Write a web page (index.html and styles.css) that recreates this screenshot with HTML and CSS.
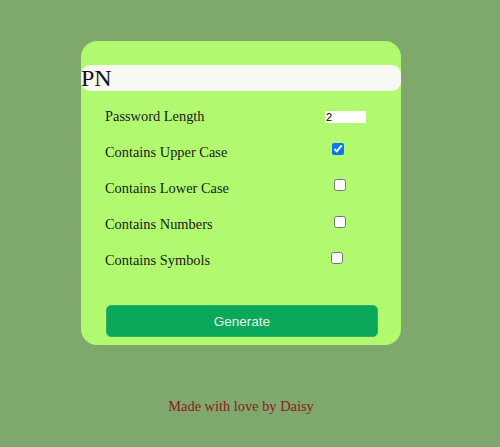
FILE: index.html
```html
<!DOCTYPE html>
<html>
<head>
<meta charset="utf-8">
<link rel="stylesheet" href="styles.css">
</head>
<body>
<div class="page">
  <div class="card">
    <h1 class="title">PN</h1>
    <div class="options">
      <label class="opt-label">Password Length</label>
      <input class="len" type="text" value="2">
      <label class="opt-label">Contains Upper Case</label>
      <input class="cb cb-a" type="checkbox" checked>
      <label class="opt-label">Contains Lower Case</label>
      <input class="cb cb-b" type="checkbox">
      <label class="opt-label">Contains Numbers</label>
      <input class="cb cb-c" type="checkbox">
      <label class="opt-label">Contains Symbols</label>
      <input class="cb cb-d" type="checkbox">
    </div>
    <button class="gen">Generate</button>
  </div>
  <p class="footer">Made with love by Daisy</p>
</div>
</body>
</html>
```
FILE: styles.css
```css
html, body {
  margin: 0;
  padding: 0;
  background: #7fa86d;
  height: 100%;
}
.page {
  width: 482px;
  padding-top: 41px;
  display: flex;
  flex-direction: column;
  align-items: center;
  font-family: "Liberation Serif", "Times New Roman", serif;
}
.card {
  width: 320px;
  box-sizing: border-box;
  background: #b1f96f;
  border-radius: 16px;
  padding: 24px 0 8px 0;
  display: flex;
  flex-direction: column;
}
.title {
  margin: 0;
  height: 26px;
  line-height: 26px;
  background: #f8f8f5;
  border-radius: 9px;
  font-size: 24px;
  font-weight: normal;
  color: #111;
}
.options {
  display: grid;
  grid-template-columns: 220px 41px;
  grid-auto-rows: 36px;
  align-items: center;
  margin: 7px 0 0 24px;
}
.opt-label {
  font-size: 14.4px;
  color: #1a1a1a;
}
.len {
  width: 41px;
  height: 12px;
  box-sizing: border-box;
  border: none;
  padding: 0 1px;
  margin: 1px 0 0 0;
  background: #fff;
  font-family: "Liberation Sans", Arial, sans-serif;
  font-size: 11px;
  line-height: 12px;
  color: #000;
}
.cb {
  width: 12px;
  height: 12px;
  margin: 0;
  justify-self: start;
}
.cb-a { margin-left: 7px; margin-bottom: 7px; }
.cb-b { margin-left: 9px; margin-bottom: 6px; }
.cb-c { margin-left: 9px; margin-bottom: 5px; }
.cb-d { margin-left: 6px; margin-bottom: 4px; }
.gen {
  margin: 27px 0 0 25px;
  width: 272px;
  height: 32px;
  background: #0aa85a;
  border: 1px solid #2bb266;
  border-radius: 5px;
  color: #e4f4e4;
  font-family: "Liberation Sans", Arial, sans-serif;
  font-size: 13.5px;
  cursor: pointer;
}
.footer {
  margin: 53px 0 0 0;
  font-size: 14.4px;
  color: #8b1c1c;
}
```
